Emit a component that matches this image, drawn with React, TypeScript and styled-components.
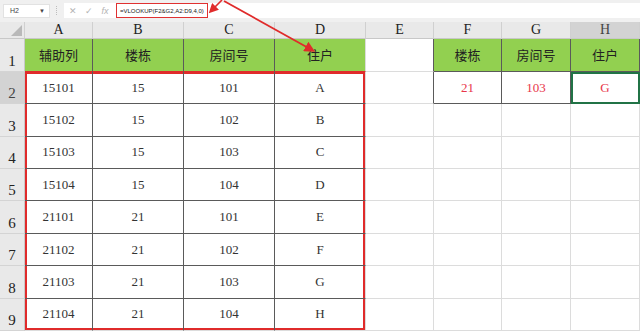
import React from 'react';
import styled, { createGlobalStyle, css } from 'styled-components';

const GlobalStyle = createGlobalStyle`
  html, body {
    margin: 0;
    padding: 0;
    background: #ffffff;
    overflow: hidden;
  }
  body {
    font-family: "Liberation Serif", "Noto Sans CJK SC", serif;
  }
`;

const COLS = [25, 68, 91, 91, 91, 68, 68, 69, 69];
const ROW_H = 32.4;

const Sheet = styled.div`
  position: relative;
  width: 640px;
  height: 331px;
  display: flex;
  flex-direction: column;
  background: #f0f0f0;
  overflow: hidden;
`;

const FormulaBar = styled.div`
  height: 18px;
  display: flex;
  align-items: center;
  padding: 3px 0 0 3px;
  box-sizing: border-box;
`;

const NameBox = styled.div`
  width: 47px;
  height: 14px;
  background: #fff;
  border: 1px solid #e2e2e2;
  box-sizing: border-box;
  display: flex;
  align-items: center;
  justify-content: space-between;
  padding: 0 4px 0 6px;
  font-family: "Liberation Sans", sans-serif;
  font-size: 7px;
  color: #444;
`;

const Caret = styled.span`
  font-size: 6px;
`;

const Dots = styled.div`
  width: 1px;
  height: 9px;
  margin: 0 6px 0 6px;
  border-left: 1px dotted #bdbdbd;
`;

const InputArea = styled.div`
  flex: 1;
  height: 15px;
  background: #fff;
  display: flex;
  align-items: center;
  padding-left: 1px;
`;

const IconSlot = styled.div<{ $italic?: boolean }>`
  width: 16px;
  display: flex;
  justify-content: center;
  color: #b4b4b4;
  font-size: 9px;
  font-family: "Liberation Sans", sans-serif;
  font-style: ${({ $italic }) => ($italic ? 'italic' : 'normal')};
`;

const FormulaBox = styled.div`
  margin-left: 3px;
  height: 15px;
  flex: none;
  box-sizing: border-box;
  border: 1.5px solid #e03131;
  display: flex;
  align-items: center;
  padding: 0 3px 0 3px;
  font-family: "Liberation Sans", sans-serif;
  font-size: 6px;
  color: #222;
  white-space: nowrap;
`;

const Band = styled.div`
  height: 4px;
`;

const Grid = styled.div`
  display: grid;
  grid-template-columns: ${COLS.map((c) => `${c}px`).join(' ')};
  grid-template-rows: 17px 33px;
  grid-auto-rows: ${ROW_H}px;
  background: #fff;
`;

type CellKind = 'colhead' | 'rowhead' | 'green' | 'data' | 'value' | 'blank' | 'corner';

const Cell = styled.div<{
  $kind: CellKind;
  $right?: string;
  $bottom?: string;
  $red?: string;
  $sel?: boolean;
  $active?: boolean;
}>`
  box-sizing: border-box;
  display: flex;
  justify-content: center;
  align-items: center;
  border-right: 1px solid ${({ $right }) => $right || '#dcdcdc'};
  border-bottom: 1px solid ${({ $bottom }) => $bottom || '#dcdcdc'};
  font-size: 13px;
  color: #333;
  position: relative;
  ${({ $kind }) =>
    $kind === 'colhead' &&
    css`
      background: #e9e9e9;
      border-right-color: #d0d0d0;
      border-bottom-color: #c8c8c8;
      font-size: 14px;
      color: #222;
      padding-top: 1px;
    `}
  ${({ $kind }) =>
    $kind === 'corner' &&
    css`
      background: #e9e9e9;
      border-right-color: #d0d0d0;
      border-bottom-color: #c8c8c8;
    `}
  ${({ $kind }) =>
    $kind === 'rowhead' &&
    css`
      background: #e9e9e9;
      border-right-color: #c8c8c8;
      border-bottom-color: #d4d4d4;
      align-items: flex-end;
      padding-bottom: 1px;
      font-size: 15px;
      color: #222;
    `}
  ${({ $kind }) =>
    $kind === 'green' &&
    css`
      background: #92d050;
      font-family: "Noto Sans CJK SC", sans-serif;
      font-size: 13px;
      color: #222;
    `}
  ${({ $kind }) =>
    $kind === 'value' &&
    css`
      color: #e8364a;
    `}
  ${({ $sel }) =>
    $sel &&
    css`
      background: #d3d3d3;
      color: #444;
    `}
  ${({ $red }) =>
    $red &&
    css`
      box-shadow: ${$red};
    `}
  ${({ $active }) =>
    $active &&
    css`
      outline: 2px solid #217346;
      outline-offset: -2px;
    `}
`;

const CornerMark = styled.div`
  position: absolute;
  right: 2px;
  bottom: 2px;
  width: 0;
  height: 0;
  border-left: 11px solid transparent;
  border-bottom: 11px solid #b9b9b9;
`;

const Arrows = styled.svg`
  position: absolute;
  left: 0;
  top: 0;
  pointer-events: none;
`;

const letters = ['A', 'B', 'C', 'D', 'E', 'F', 'G', 'H'];

const rows = [
  ['15101', '15', '101', 'A'],
  ['15102', '15', '102', 'B'],
  ['15103', '15', '103', 'C'],
  ['15104', '15', '104', 'D'],
  ['21101', '21', '101', 'E'],
  ['21102', '21', '102', 'F'],
  ['21103', '21', '103', 'G'],
  ['21104', '21', '104', 'H'],
];

const RED = '#e02b2b';
const DARK = '#5a5a5a';

// red outline around A2:D9 drawn as inset shadows on the edge cells
function redShadow(r: number, c: number): string | undefined {
  const parts: string[] = [];
  if (c === 0) parts.push(`inset 2px 0 0 ${RED}`);
  if (c === 3) parts.push(`inset -2px 0 0 ${RED}`);
  if (r === 0) parts.push(`inset 0 2px 0 ${RED}`);
  if (r === rows.length - 1) parts.push(`inset 0 -2px 0 ${RED}`);
  return parts.length ? parts.join(', ') : undefined;
}

export default function App() {
  const greenHeads = ['辅助列', '楼栋', '房间号', '住户'];
  const lookupHeads = ['楼栋', '房间号', '住户'];
  const lookupVals = ['21', '103', 'G'];

  return (
    <Sheet>
      <GlobalStyle />
      <FormulaBar>
        <NameBox>
          <span>H2</span>
          <Caret>▼</Caret>
        </NameBox>
        <Dots />
        <InputArea>
          <IconSlot>✕</IconSlot>
          <IconSlot>✓</IconSlot>
          <IconSlot $italic>fx</IconSlot>
          <FormulaBox>=VLOOKUP(F2&amp;G2,A2:D9,4,0)</FormulaBox>
        </InputArea>
      </FormulaBar>
      <Band />
      <Grid>
        <Cell $kind="corner">
          <CornerMark />
        </Cell>
        {letters.map((l) => (
          <Cell key={l} $kind="colhead" $sel={l === 'H'} $bottom={l === 'H' ? '#217346' : undefined}>
            {l}
          </Cell>
        ))}

        <Cell $kind="rowhead">1</Cell>
        {greenHeads.map((h, i) => (
          <Cell key={h} $kind="green" $right={i < 3 ? DARK : '#dcdcdc'} $bottom={RED}>
            {h}
          </Cell>
        ))}
        <Cell $kind="blank" $right={DARK} />
        {lookupHeads.map((h) => (
          <Cell key={h} $kind="green" $right={DARK} $bottom={DARK}>
            {h}
          </Cell>
        ))}

        {rows.map((row, r) => (
          <React.Fragment key={r}>
            <Cell $kind="rowhead" $sel={r === 0}>
              {r + 2}
            </Cell>
            {row.map((v, c) => (
              <Cell
                key={c}
                $kind="data"
                $right={c < 3 ? DARK : '#dcdcdc'}
                $bottom={r < rows.length - 1 ? DARK : '#dcdcdc'}
                $red={redShadow(r, c)}
              >
                {v}
              </Cell>
            ))}
            <Cell $kind="blank" $right={r === 0 ? DARK : undefined} />
            {[0, 1, 2].map((c) =>
              r === 0 ? (
                <Cell key={c} $kind="value" $right={DARK} $bottom={DARK} $active={c === 2}>
                  {lookupVals[c]}
                </Cell>
              ) : (
                <Cell key={c} $kind="blank" />
              )
            )}
          </React.Fragment>
        ))}
      </Grid>
      <Arrows width={640} height={331} viewBox="0 0 640 331">
        <defs>
          <marker id="head" markerWidth="6" markerHeight="6" refX="4" refY="3" orient="auto">
            <path d="M0,0 L6,3 L0,6 Z" fill={RED} />
          </marker>
        </defs>
        <line x1={222} y1={0} x2={211} y2={11} stroke={RED} strokeWidth={1.6} markerEnd="url(#head)" />
        <line x1={224} y1={1} x2={312} y2={50} stroke={RED} strokeWidth={1.8} markerEnd="url(#head)" />
      </Arrows>
    </Sheet>
  );
}
